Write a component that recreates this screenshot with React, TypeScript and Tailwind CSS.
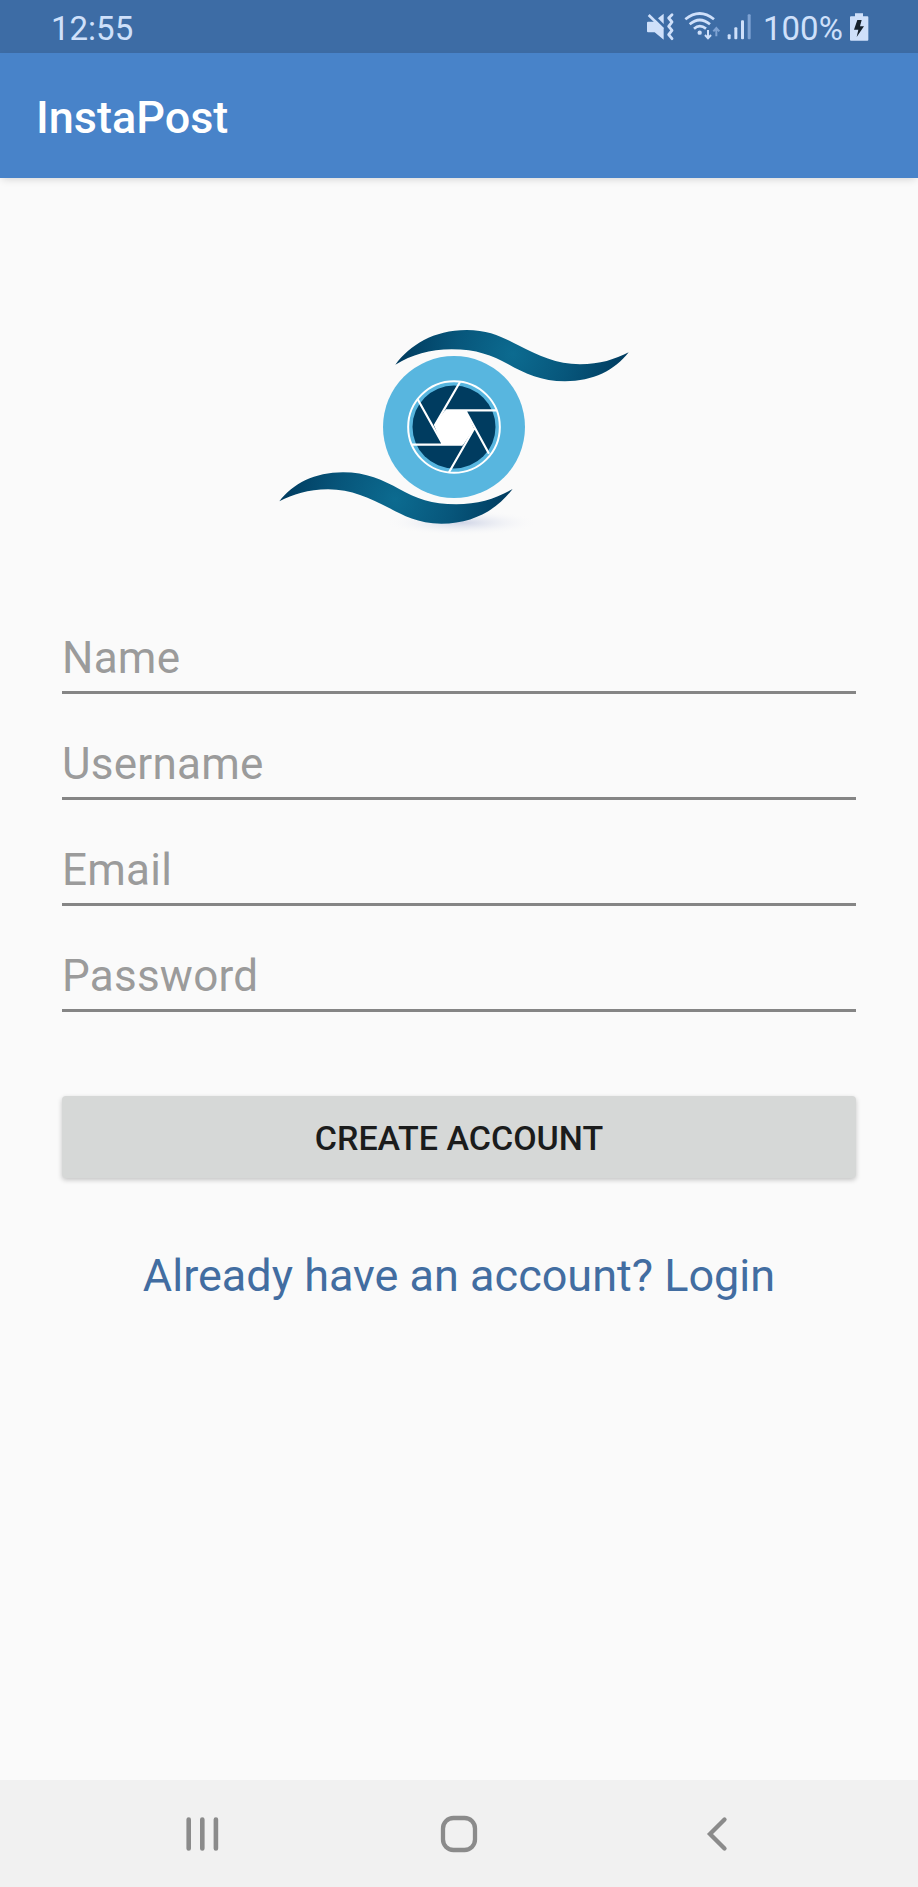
import React from "react";

const SWOOSH =
  "M376 164C420 106 490 60 590 60C660 60 705 85 745 106C805 137 860 163 930 163C990 163 1035 148 1076 127C1035 180 970 214 885 214C815 214 765 191 715 163C665 136 620 118 545 118C480 118 425 135 376 164Z";

function Logo() {
  return (
    <svg viewBox="0 0 1110 720" className="h-[240px] w-[370px]" aria-label="InstaPost logo">
      <defs>
        <radialGradient id="swoosh" gradientUnits="userSpaceOnUse" cx="728" cy="132" r="340">
          <stop offset="0" stopColor="#0c6b90" />
          <stop offset="0.5" stopColor="#07567b" />
          <stop offset="1" stopColor="#003c60" />
        </radialGradient>
        <radialGradient id="ground">
          <stop offset="0" stopColor="#8f9cc8" stopOpacity="0.4" />
          <stop offset="0.45" stopColor="#b4bddb" stopOpacity="0.2" />
          <stop offset="1" stopColor="#fafafa" stopOpacity="0" />
        </radialGradient>
      </defs>
      <ellipse cx="575" cy="638" rx="230" ry="38" fill="url(#ground)" />
      <path d={SWOOSH} fill="url(#swoosh)" />
      <path d={SWOOSH} fill="url(#swoosh)" transform="rotate(180 552 350.5)" />
      <circle cx="552" cy="351" r="213" fill="#58b6df" />
      <circle cx="552" cy="351" r="137.500" fill="none" stroke="#fff" strokeWidth="6" />
      <circle cx="552" cy="351" r="124.500" fill="#003c60" />
      <path d="M525 301H588L612 356L580 404H516L492 346Z" fill="#fff" />
      <path
        d="M570 216L494 347M679 301H527M657 431L587 303M537 487L613 355M426 404H578M443 268L518 402"
        fill="none"
        stroke="#fff"
        strokeWidth="6.500"
      />
    </svg>
  );
}

function MuteVibrateIcon() {
  return (
    <svg viewBox="46 36 87 90" className="h-[30px] w-[29px]" fill="#cfe0fa">
      <path d="M52 65H70L75 61L99 85V119L72 97H52Q49 97 49 94V68Q49 65 52 65Z" />
      <path d="M82 55L99 41V72Z" />
      <path d="M54 45L97 87" stroke="#cfe0fa" strokeWidth="8" />
      <path
        d="M124 44L114 54L124 66L114 79L124 91L114 104L124 116"
        fill="none"
        stroke="#cfe0fa"
        strokeWidth="8.500"
        strokeLinejoin="round"
        strokeLinecap="round"
      />
    </svg>
  );
}

function WifiIcon() {
  return (
    <svg viewBox="160 36 111 90" className="h-[30px] w-[37px]" fill="none" stroke="#cfe0fa" strokeWidth="8">
      <path d="M164 58Q207 23 250 58M177 73Q207 47 238 73M190 86Q207 71 226 86" />
      <circle cx="207" cy="98" r="6.500" fill="#cfe0fa" stroke="none" />
      <path d="M232 90V114M223 105L232 115L241 105" strokeWidth="6" />
      <path d="M257 109V85M248 94L257 84L266 94" strokeWidth="6" stroke="#7fa3d3" />
    </svg>
  );
}

function SignalIcon() {
  return (
    <svg viewBox="288 36 75 90" className="h-[30px] w-[25px]" fill="#cfe0fa">
      <rect x="290" y="103" width="9" height="15" rx="3" />
      <rect x="310" y="82" width="9" height="36" rx="3" />
      <rect x="330" y="61" width="9" height="57" rx="3" />
      <rect x="350" y="43" width="9" height="75" rx="3" fill="#7fa3d3" />
    </svg>
  );
}

function BatteryIcon() {
  return (
    <svg viewBox="654 36 60 90" className="h-[30px] w-[20px]" fill="#cfe0fa">
      <path d="M672 40H696V49H709Q712 49 712 52V119Q712 122 709 122H660Q657 122 657 119V52Q657 49 660 49H672Z" />
      <path d="M679 60H692L687 79H699L677 111L682 89H669Z" fill="#16212c" />
    </svg>
  );
}

const FIELDS = [
  { label: "Name", type: "text" },
  { label: "Username", type: "text" },
  { label: "Email", type: "email" },
  { label: "Password", type: "password" },
];

export default function App() {
  return (
    <div className="flex h-[1887px] w-[918px] flex-col overflow-hidden bg-[#fafafa] font-['Roboto',sans-serif]">
      <div className="flex h-[53px] shrink-0 items-center bg-[#3d6ca5] pr-[49px] pl-[51px] text-[#cfe0fa]">
        <span className="pt-[3px] text-[33px] leading-none">12:55</span>
        <div className="ml-auto flex items-center">
          <MuteVibrateIcon />
          <div className="w-[9px]" />
          <WifiIcon />
          <div className="w-[6px]" />
          <SignalIcon />
          <span className="w-[97px] pt-[3px] pl-[11px] text-[33px] leading-none whitespace-nowrap">100%</span>
          <BatteryIcon />
        </div>
      </div>
      <header className="flex h-[125px] shrink-0 items-center bg-[#4883c9] pt-[4px] pl-9 shadow-[0_3px_8px_-2px_rgba(0,0,0,0.16)]">
        <h1 className="text-[45px] leading-none font-medium text-white">InstaPost</h1>
      </header>
      <main className="flex flex-1 flex-col px-[62px] pt-[132px]">
        <div className="pl-[208px]">
          <Logo />
        </div>
        <form className="flex flex-col pt-[38px]">
          {FIELDS.map((f) => (
            <label key={f.label} className="flex h-[106px] flex-col justify-end">
              <input
                type={f.type}
                placeholder={f.label}
                className="h-[73px] border-b-[3px] border-[#858585] bg-transparent pt-[3px] text-[44px] leading-none tracking-[0.25px] outline-none placeholder:text-[#9b9b9b]"
              />
            </label>
          ))}
          <button
            type="button"
            className="mt-[84px] h-[82px] rounded-[4px] bg-[#d6d8d7] pt-[2px] text-[34px] leading-none font-medium text-[#1b1c1c] shadow-[0_2px_5px_rgba(0,0,0,0.22)]"
          >
            CREATE ACCOUNT
          </button>
        </form>
        <a className="mt-[75px] text-center text-[45px] leading-none text-[#426da1]">Already have an account? Login</a>
      </main>
      <nav className="flex h-[107px] shrink-0 items-center justify-between bg-[#f1f1f1] px-[182px]">
        <svg viewBox="0 0 40 50" className="h-[50px] w-[40px]" fill="none" stroke="#8b8b8b" strokeWidth="4.600" strokeLinecap="round">
          <path d="M6.700 10.500V39.500M20.300 10.500V39.500M33.900 10.500V39.500" />
        </svg>
        <svg viewBox="0 0 40 50" className="h-[50px] w-[40px]" fill="none" stroke="#8b8b8b" strokeWidth="4.300">
          <rect x="4" y="9" width="32" height="32" rx="10.500" />
        </svg>
        <svg viewBox="0 0 40 50" className="h-[50px] w-[40px]" fill="none" stroke="#8b8b8b" strokeWidth="4.300" strokeLinecap="round">
          <path d="M28.500 10.500L14 25L28.500 39.500" />
        </svg>
      </nav>
    </div>
  );
}
